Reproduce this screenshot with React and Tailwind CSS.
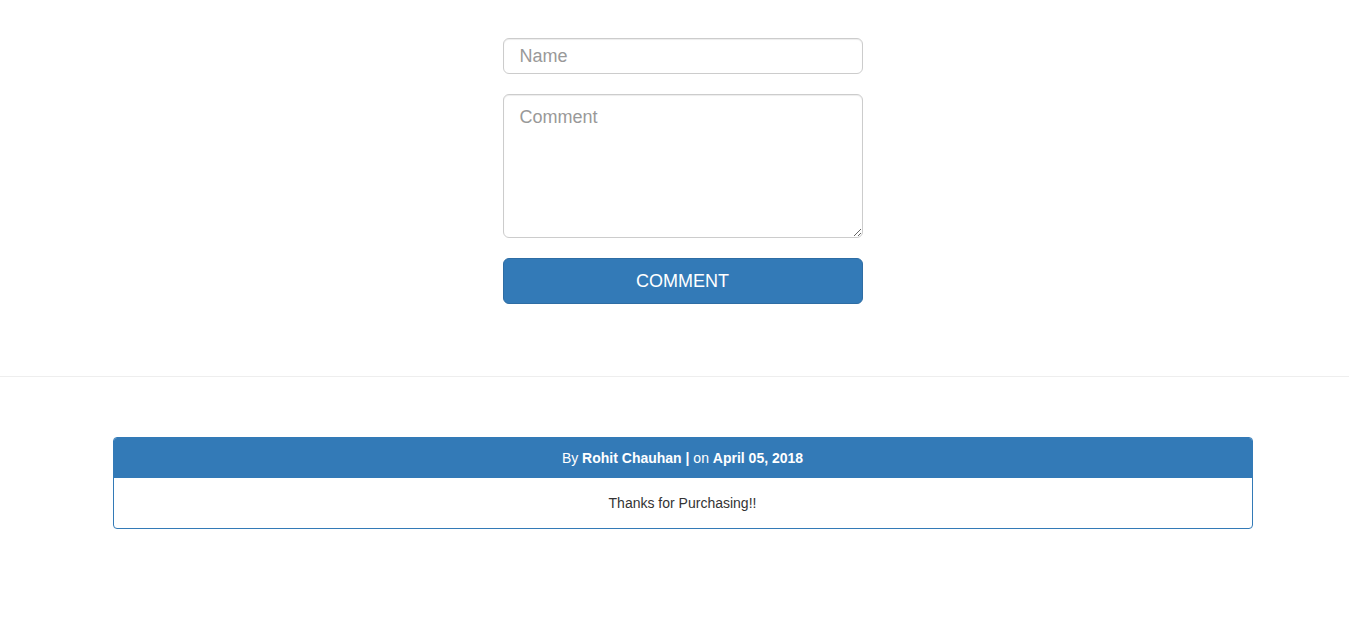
import React from 'react';

const App = () => (
  <div className="min-h-[620px] bg-white font-['Liberation_Sans',Arial,sans-serif] text-[14px] text-[#333]">
    {/* --- Comment form --- */}
    <div className="pt-[38px] pl-4 flex justify-center">
      <form className="w-[360px] flex flex-col" onSubmit={(e) => e.preventDefault()}>
        <input
          type="text"
          placeholder="Name"
          className="h-[36px] w-full px-4 text-[18px] border border-[#ccc] rounded-md placeholder:text-[#999] focus:outline-none shadow-[inset_0_1px_1px_rgba(0,0,0,0.075)]"
        />
        <textarea
          placeholder="Comment"
          className="mt-5 h-[144px] w-full px-4 pt-[11px] pb-[10px] text-[18px] leading-[1.33] border border-[#ccc] rounded-md placeholder:text-[#999] focus:outline-none shadow-[inset_0_1px_1px_rgba(0,0,0,0.075)]"
        />
        <button
          type="submit"
          className="mt-5 h-[46px] w-full bg-[#337ab7] border border-[#2e6da4] rounded-md text-white text-[18px]"
        >
          COMMENT
        </button>
      </form>
    </div>

    {/* --- Divider --- */}
    <hr className="mt-[72px] border-0 border-t border-[#eee]" />

    {/* --- Comment list --- */}
    <div className="pt-[60px] pl-4 flex justify-center">
      <div className="w-[1140px] border border-[#337ab7] rounded">
        <div className="bg-[#337ab7] text-white text-center px-[15px] py-[10px] leading-5 rounded-t-[3px]">
          By <b>Rohit Chauhan |</b> on <b>April 05, 2018</b>
        </div>
        <div className="text-center p-[15px] leading-5">Thanks for Purchasing!!</div>
      </div>
    </div>
  </div>
);

export default App;
